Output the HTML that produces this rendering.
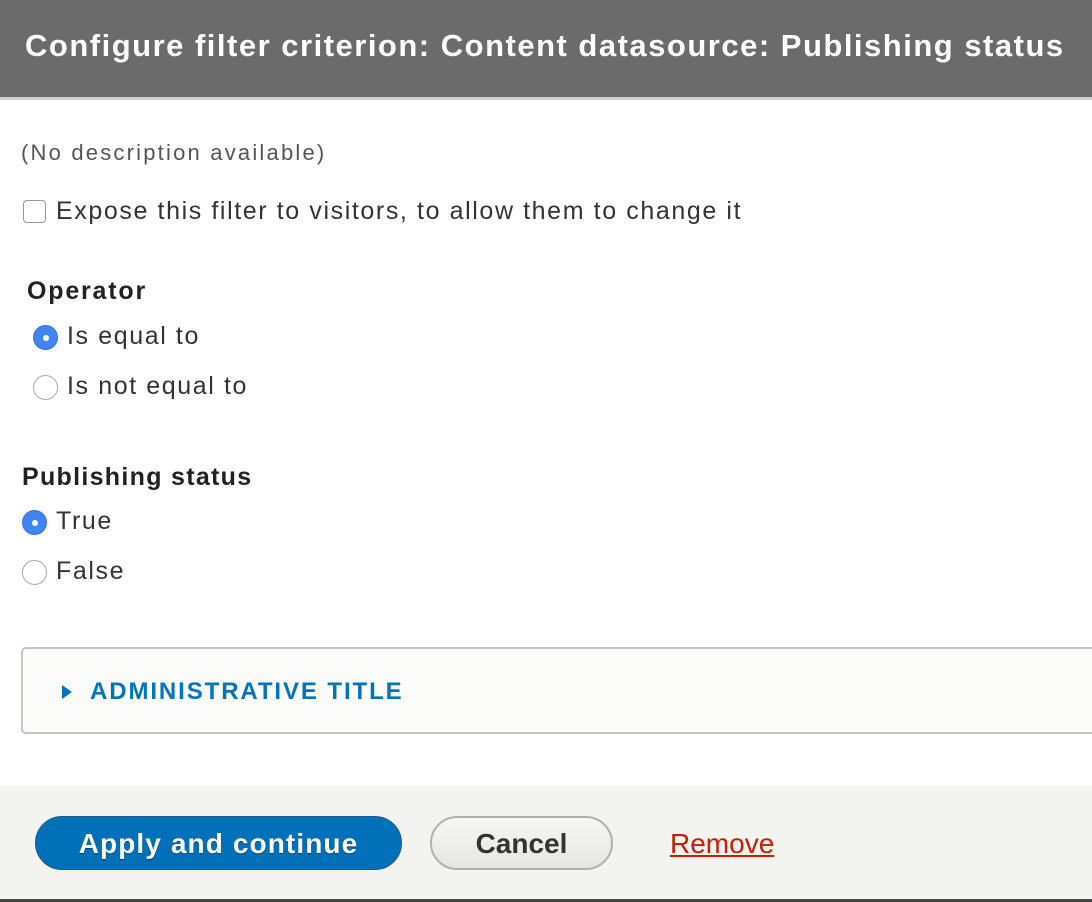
<!DOCTYPE html>
<html><head><style>
*{margin:0;padding:0;box-sizing:border-box}
body{width:1092px;height:902px;overflow:hidden;background:#fff;font-family:"Liberation Sans",sans-serif;position:relative;color:#333}
.abs{position:absolute;white-space:nowrap}
.title{left:0;top:0;width:1092px;background:#6b6b6b;border-bottom:3px solid #d0d0d0;height:100px}
.title span{position:absolute;left:25px;top:28px;color:#fff;font-weight:bold;font-size:31px;letter-spacing:1.5px}
.radio{position:absolute;width:25px;height:25px;border-radius:50%;border:1px solid #aaa;background:#fff}
.radio.on{background:#3f86f4;border-color:#3275d8}
.radio.on::after{content:"";position:absolute;left:9px;top:9px;width:6px;height:6px;border-radius:50%;background:#fff}
.t{font-size:25px;color:#333;letter-spacing:1.6px}
.b{font-weight:bold;font-size:25px;color:#222;letter-spacing:1.5px}
</style></head><body>
<div class="abs title"><span>Configure filter criterion: Content datasource: Publishing status</span></div>
<div class="abs" style="left:21px;top:140px;font-size:22px;color:#555;letter-spacing:2.2px">(No description available)</div>
<div class="abs" style="left:23px;top:200px;width:23px;height:23px;border:1px solid #999;border-radius:4px;background:#fff"></div>
<div class="abs t" style="left:56px;top:197px">Expose this filter to visitors, to allow them to change it</div>
<div class="abs b" style="left:27px;top:277px;letter-spacing:1.8px">Operator</div>
<div class="radio on" style="left:33px;top:325px"></div>
<div class="abs t" style="left:67px;top:322px">Is equal to</div>
<div class="radio" style="left:33px;top:375px"></div>
<div class="abs t" style="left:67px;top:372px">Is not equal to</div>
<div class="abs b" style="left:22px;top:463px;letter-spacing:1.3px">Publishing status</div>
<div class="radio on" style="left:22px;top:510px"></div>
<div class="abs t" style="left:56px;top:507px">True</div>
<div class="radio" style="left:22px;top:560px"></div>
<div class="abs t" style="left:56px;top:557px">False</div>
<div class="abs" style="left:21px;top:647px;width:1090px;height:87px;border:2px solid #c4c4c4;border-right:none;border-radius:5px 0 0 5px;background:#fbfbf9"></div>
<div class="abs" style="left:62px;top:685px;width:0;height:0;border-left:10px solid #0074bd;border-top:7px solid transparent;border-bottom:7px solid transparent"></div>
<div class="abs" style="left:90px;top:678px;font-size:24px;font-weight:bold;color:#0074bd;letter-spacing:1.9px">ADMINISTRATIVE TITLE</div>
<div class="abs" style="left:0;top:786px;width:1092px;height:113px;background:#f3f3f0"></div>
<div class="abs" style="left:0;top:899px;width:1092px;height:3px;background:#444"></div>
<div class="abs" style="left:35px;top:816px;width:367px;height:54px;border-radius:27px;background:#0071b8;border:1px solid #1a5a92;color:#fff;font-weight:bold;font-size:28px;text-align:center;line-height:54px;letter-spacing:1.1px;text-shadow:0 1px 1px #0a3e6a">Apply and continue</div>
<div class="abs" style="left:430px;top:816px;width:183px;height:54px;border-radius:27px;background:linear-gradient(#f6f6f3,#e6e6e1);border:2px solid #b0b0ad;color:#333;font-weight:bold;font-size:28px;text-align:center;line-height:52px">Cancel</div>
<div class="abs" style="left:670px;top:828px;font-size:28px;color:#c81d00;text-decoration:underline">Remove</div>
</body></html>
